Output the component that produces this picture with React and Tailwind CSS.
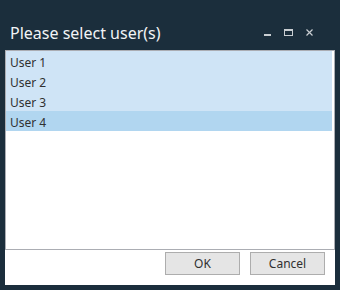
export default function App() {
  const users = ["User 1", "User 2", "User 3", "User 4"];
  return (
    <div
      className="w-[340px] h-[290px] bg-[#1b2e3c] flex flex-col"
      style={{ fontFamily: '"Noto Sans", "Open Sans", sans-serif' }}
    >
      <div className="h-[50px] flex items-start pl-[10px] pr-[27px] pt-[23px]">
        <div className="text-[16px] leading-[20px] text-[#f2f4f6] flex-1">Please select user(s)</div>
        <div className="flex items-start gap-[13px] pt-[6px]">
          <svg width="7" height="8" viewBox="0 0 7 8">
            <rect x="0" y="5" width="7" height="2" fill="#c9ced2" />
          </svg>
          <svg width="9" height="8" viewBox="0 0 9 8">
            <rect x="0.5" y="0.5" width="8" height="6" fill="none" stroke="#c9ced2" strokeWidth="1" />
            <rect x="0" y="0" width="9" height="2" fill="#c9ced2" />
          </svg>
          <svg width="7" height="8" viewBox="0 0 7 8">
            <path d="M0.5 0.5 L6.5 6.5 M6.5 0.5 L0.5 6.5" stroke="#c9ced2" strokeWidth="1.2" />
          </svg>
        </div>
      </div>
      <div className="mx-[5px] h-[235px] bg-white flex flex-col">
        <div className="h-[200px] border border-[#abadb3] bg-white pr-[2px]">
          {users.map((u, i) => (
            <div
              key={u}
              className={
                "h-[20px] pl-[4px] pt-[3px] text-[12px] leading-[17px] text-[#303030] " +
                (i === 3 ? "bg-[#b1d6f0]" : "bg-[#cfe4f6]")
              }
            >
              {u}
            </div>
          ))}
        </div>
        <div className="flex justify-end gap-[10px] pt-[2px] pr-[10px]">
          <button className="w-[75px] h-[23px] bg-[#e5e5e5] border border-[#adadad] text-[12px] text-[#303030]">
            OK
          </button>
          <button className="w-[75px] h-[23px] bg-[#e5e5e5] border border-[#adadad] text-[12px] text-[#303030]">
            Cancel
          </button>
        </div>
      </div>
    </div>
  );
}
